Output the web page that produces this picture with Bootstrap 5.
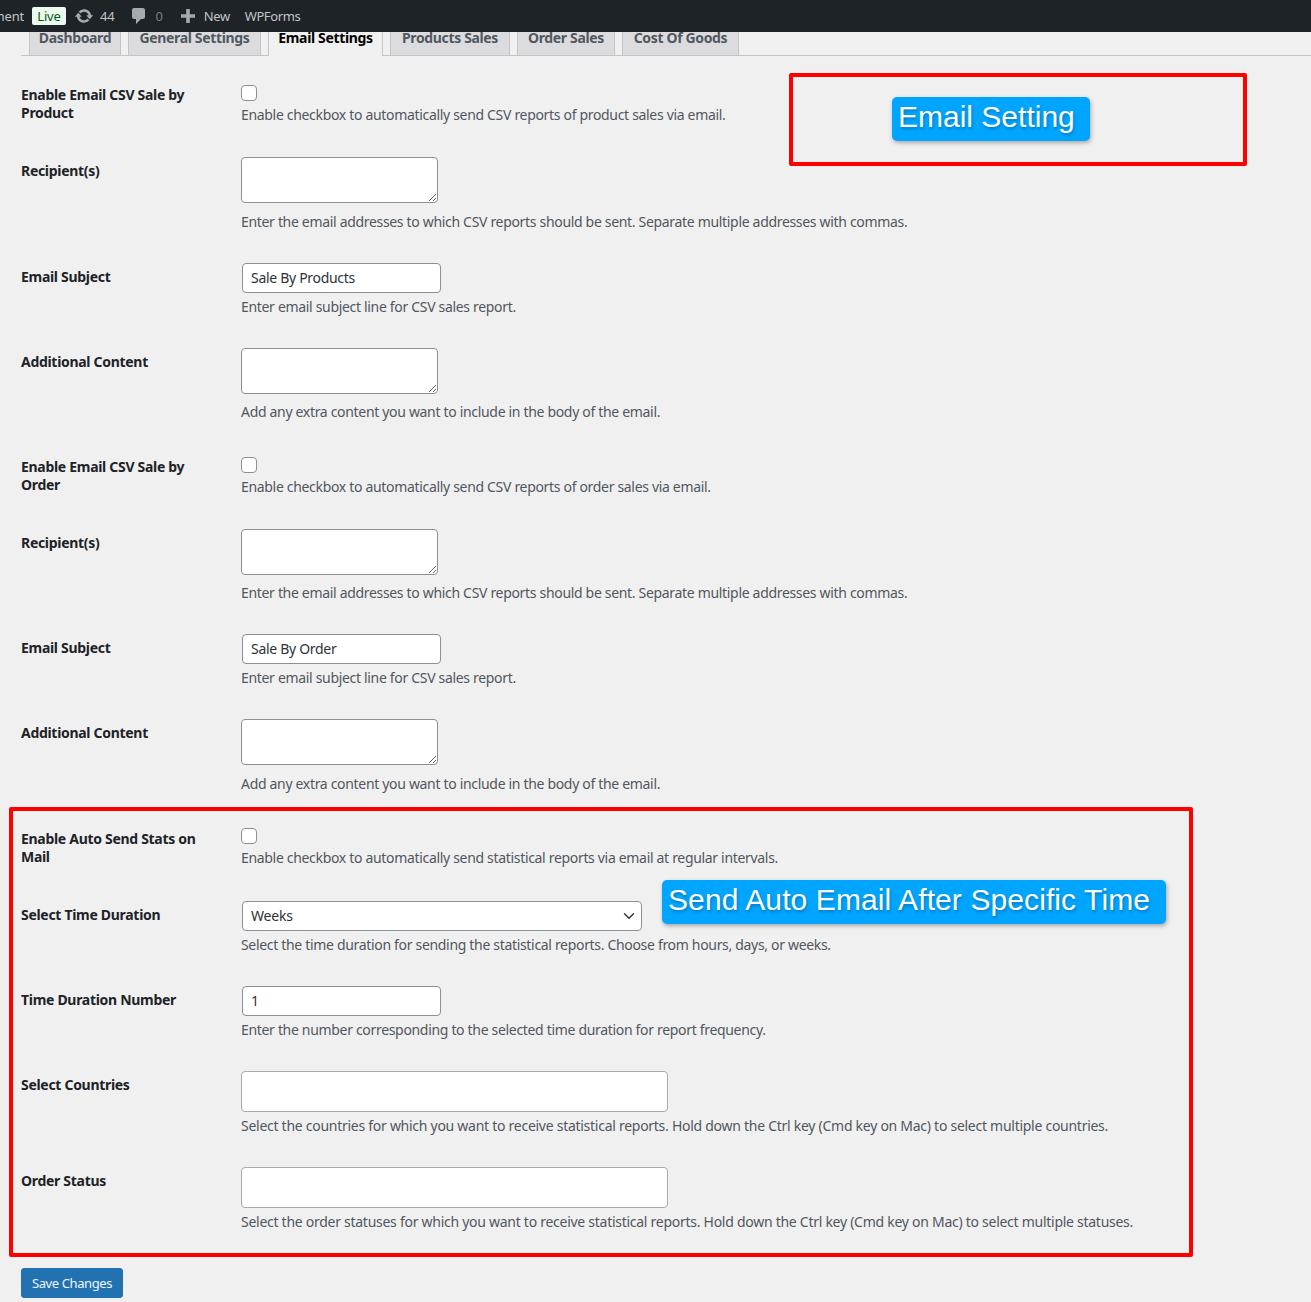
<!DOCTYPE html>
<html lang="en">
<head>
<meta charset="utf-8">
<title>Email Settings</title>
<link href="https://cdn.jsdelivr.net/npm/bootstrap@5.3.0/dist/css/bootstrap.min.css" rel="stylesheet">
<style>
html,body{background:#f0f0f1;}
body{font-family:"Noto Sans","Liberation Sans",sans-serif;font-size:14px;line-height:21px;color:#3c434a;height:1302px;overflow:hidden;position:relative;}
.adminbar{height:32px;background:#1d2327;color:#c3c4c7;font-size:13px;line-height:32px;white-space:nowrap;overflow:hidden;letter-spacing:-.2px;}
.bar-clip{width:24px;overflow:hidden;direction:rtl;}
.live-pill{width:34px;height:18px;margin-left:8px;background:#edfaef;color:#005c12;border-radius:2px;line-height:18px;text-align:center;}
.bar-ic{fill:#a7aaad;display:block;flex:none;}
.ic-sync{margin-left:8px;}
.ic-comment{margin-left:15px;}
.ic-plus{margin-left:16px;}
.bar-count{margin-left:6px;}
.bar-zero{margin-left:6px;color:#787c82;}
.bar-new{margin-left:7px;letter-spacing:-.4px;}
.bar-forms{margin-left:15px;letter-spacing:-.4px;}
.tabstrip{height:24px;margin-left:21px;padding-left:8px;border-bottom:1px solid #c3c4c7;gap:7px;flex-wrap:nowrap;}
.tabstrip .nav-link{height:23px;padding:0;text-align:center;line-height:12px;font-weight:700;font-size:14px;letter-spacing:-.35px;color:#50575e;background:#dcdcde;border:1px solid #c3c4c7;border-top:0;border-bottom:0;border-radius:0;white-space:nowrap;}
.tabstrip .nav-link.active{height:24px;color:#000;background:#f0f0f1;}
.tab-dash{width:92px;}
.tab-general{width:133px;}
.tab-email{width:115px;}
.tab-products{width:120px;}
.tab-order{width:98px;}
.tab-cost{width:117px;}
.settings{padding-left:21px;padding-top:11px;}
.set-row{display:flex;}
.set-head{width:220px;flex:none;padding-top:20px;padding-right:20px;font-weight:700;line-height:18px;letter-spacing:-.3px;color:#1d2327;}
.head-up{padding-top:19px;}
.set-cell{padding-top:15px;}
.set-desc{display:block;color:#50575e;white-space:nowrap;letter-spacing:-.32px;}
.desc-wide{letter-spacing:-.27px;}
.check-cell{padding-top:18px;}
.form-check-input.wp-check{display:block;width:16px;height:16px;margin:0 0 3px;background-color:#fff;border:1px solid #8c8f94;border-radius:4px;}
.form-control.wp-area{display:block;width:197px;height:46px;padding:2px 6px;margin-bottom:8px;background:#fff;border:1px solid #8c8f94;border-radius:4px;}
.form-control.wp-area.area-tight{margin-bottom:7px;}
.form-control.wp-text{display:block;width:199px;height:30px;margin:0 0 3px 1px;padding:0 8px 2px;font-size:14px;line-height:26px;letter-spacing:-.3px;color:#2c3338;background:#fff;border:1px solid #8c8f94;border-radius:4px;}
.form-select.wp-select{display:block;width:400px;height:30px;margin:0 0 3px 1px;padding:0 24px 0 8px;font-size:14px;line-height:28px;letter-spacing:-.2px;color:#2c3338;background-color:#fff;background-position:right 4px center;border:1px solid #8c8f94;border-radius:4px;}
.form-select.wp-multi{display:block;width:427px;height:41px;margin:0 0 3px;padding:0;background:#fff;border:1px solid #a7aaad;border-radius:4px;}
.r-check{height:75px;}
.r-check-b{height:76px;}
.r-area{height:106px;}
.r-area-b{height:105px;}
.r-text{height:85px;}
.r-multi{height:96px;}
.btn.save-btn{display:block;width:102px;height:30px;margin:20px 0 0 21px;padding:0;font-size:13px;line-height:28px;letter-spacing:-.4px;color:#f0f6fc;background:#2271b1;border:1px solid #2271b1;border-radius:3px;}
.red-frame{position:absolute;border:4px solid #f00;border-radius:2px;pointer-events:none;}
.frame-top{left:789px;top:73px;width:458px;height:93px;}
.frame-bottom{left:9px;top:807px;width:1184px;height:450px;}
.callout{position:absolute;height:44px;padding-left:6px;background:#00a5ff;color:#fff;font-family:"Liberation Sans",Arial,sans-serif;font-size:30px;line-height:40px;border-radius:5px;box-shadow:1px 2px 4px rgba(0,0,0,.3);text-shadow:1px 2px 3px rgba(0,0,0,.25);white-space:nowrap;}
.call-a{left:892px;top:97px;width:198px;}
.call-b{left:662px;top:880px;width:504px;letter-spacing:.1px;}
</style>
</head>
<body>
<div class="adminbar d-flex align-items-center">
  <span class="bar-clip">ment</span>
  <span class="live-pill">Live</span>
  <svg class="bar-ic ic-sync" width="20" height="20" viewBox="0 0 20 20"><path d="M10.2 3.28c3.53 0 6.43 2.61 6.92 6h2.08l-3.5 4-3.5-4h2.32c-.45-1.97-2.21-3.45-4.32-3.45-1.45 0-2.73.71-3.54 1.79L4.7 5.69C5.96 4.15 7.96 3.28 10.2 3.28zm-.4 13.44c-3.52 0-6.43-2.61-6.92-6H.8l3.5-4c1.17 1.33 2.33 2.67 3.5 4H5.48c.45 1.97 2.21 3.45 4.32 3.45 1.45 0 2.73-.71 3.54-1.79l1.96 1.93c-1.26 1.54-3.26 2.41-5.5 2.41z"/></svg>
  <span class="bar-count">44</span>
  <svg class="bar-ic ic-comment" width="20" height="20" viewBox="0 0 20 20"><path d="M5 2h9c1.100 0 2 .9 2 2v7c0 1.100-.9 2-2 2h-2l-5 5v-5H5c-1.100 0-2-.9-2-2V4c0-1.100.9-2 2-2z"/></svg>
  <span class="bar-zero">0</span>
  <svg class="bar-ic ic-plus" width="18" height="18" viewBox="0 0 18 18"><path d="M7.200 2h3.600v5.200H16v3.600h-5.200V16H7.200v-5.200H2V7.200h5.200z"/></svg>
  <span class="bar-new">New</span>
  <span class="bar-forms">WPForms</span>
</div>
<ul class="nav tabstrip">
  <li class="nav-item"><a class="nav-link tab-dash" href="#">Dashboard</a></li>
  <li class="nav-item"><a class="nav-link tab-general" href="#">General Settings</a></li>
  <li class="nav-item"><a class="nav-link tab-email active" href="#">Email Settings</a></li>
  <li class="nav-item"><a class="nav-link tab-products" href="#">Products Sales</a></li>
  <li class="nav-item"><a class="nav-link tab-order" href="#">Order Sales</a></li>
  <li class="nav-item"><a class="nav-link tab-cost" href="#">Cost Of Goods</a></li>
</ul>
<form class="settings">
  <div class="set-row r-check"><div class="set-head head-up">Enable Email CSV Sale by Product</div><div class="check-cell"><input class="form-check-input wp-check" type="checkbox" aria-label="Enable Email CSV Sale by Product"><span class="set-desc">Enable checkbox to automatically send CSV reports of product sales via email.</span></div></div>
  <div class="set-row r-area"><div class="set-head">Recipient(s)</div><div class="set-cell"><textarea class="form-control wp-area" aria-label="Recipients"></textarea><span class="set-desc">Enter the email addresses to which CSV reports should be sent. Separate multiple addresses with commas.</span></div></div>
  <div class="set-row r-text"><div class="set-head">Email Subject</div><div class="set-cell"><input class="form-control wp-text" type="text" value="Sale By Products" aria-label="Email Subject"><span class="set-desc">Enter email subject line for CSV sales report.</span></div></div>
  <div class="set-row r-area"><div class="set-head">Additional Content</div><div class="set-cell"><textarea class="form-control wp-area area-tight" aria-label="Additional Content"></textarea><span class="set-desc">Add any extra content you want to include in the body of the email.</span></div></div>
  <div class="set-row r-check"><div class="set-head head-up">Enable Email CSV Sale by Order</div><div class="check-cell"><input class="form-check-input wp-check" type="checkbox" aria-label="Enable Email CSV Sale by Order"><span class="set-desc">Enable checkbox to automatically send CSV reports of order sales via email.</span></div></div>
  <div class="set-row r-area-b"><div class="set-head">Recipient(s)</div><div class="set-cell"><textarea class="form-control wp-area area-tight" aria-label="Recipients"></textarea><span class="set-desc">Enter the email addresses to which CSV reports should be sent. Separate multiple addresses with commas.</span></div></div>
  <div class="set-row r-text"><div class="set-head">Email Subject</div><div class="set-cell"><input class="form-control wp-text" type="text" value="Sale By Order" aria-label="Email Subject"><span class="set-desc">Enter email subject line for CSV sales report.</span></div></div>
  <div class="set-row r-area"><div class="set-head">Additional Content</div><div class="set-cell"><textarea class="form-control wp-area" aria-label="Additional Content"></textarea><span class="set-desc">Add any extra content you want to include in the body of the email.</span></div></div>
  <div class="set-row r-check-b"><div class="set-head">Enable Auto Send Stats on Mail</div><div class="check-cell"><input class="form-check-input wp-check" type="checkbox" aria-label="Enable Auto Send Stats on Mail"><span class="set-desc">Enable checkbox to automatically send statistical reports via email at regular intervals.</span></div></div>
  <div class="set-row r-text"><div class="set-head">Select Time Duration</div><div class="set-cell"><select class="form-select wp-select" aria-label="Select Time Duration"><option>Weeks</option></select><span class="set-desc">Select the time duration for sending the statistical reports. Choose from hours, days, or weeks.</span></div></div>
  <div class="set-row r-text"><div class="set-head">Time Duration Number</div><div class="set-cell"><input class="form-control wp-text" type="text" value="1" aria-label="Time Duration Number"><span class="set-desc">Enter the number corresponding to the selected time duration for report frequency.</span></div></div>
  <div class="set-row r-multi"><div class="set-head">Select Countries</div><div class="set-cell"><select class="form-select wp-multi" multiple aria-label="Select Countries"></select><span class="set-desc desc-wide">Select the countries for which you want to receive statistical reports. Hold down the Ctrl key (Cmd key on Mac) to select multiple countries.</span></div></div>
  <div class="set-row r-multi"><div class="set-head">Order Status</div><div class="set-cell"><select class="form-select wp-multi" multiple aria-label="Order Status"></select><span class="set-desc desc-wide">Select the order statuses for which you want to receive statistical reports. Hold down the Ctrl key (Cmd key on Mac) to select multiple statuses.</span></div></div>
</form>
<button class="btn btn-primary save-btn" type="button">Save Changes</button>
<div class="red-frame frame-top"></div>
<div class="red-frame frame-bottom"></div>
<div class="callout call-a">Email Setting</div>
<div class="callout call-b">Send Auto Email After Specific Time</div>
<script src="https://cdn.jsdelivr.net/npm/bootstrap@5.3.0/dist/js/bootstrap.bundle.min.js"></script>
</body>
</html>
